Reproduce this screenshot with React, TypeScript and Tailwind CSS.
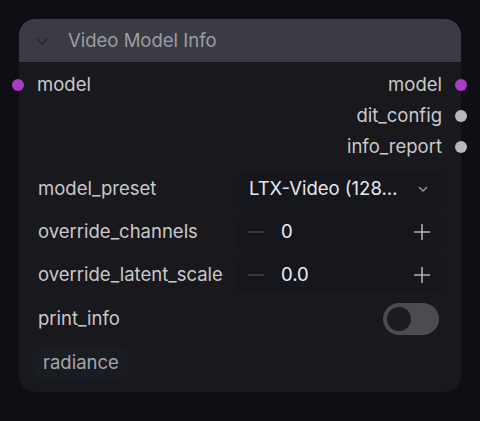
import React from 'react';

const Dot = ({ color }: { color: string }) => (
  <span className={`block w-[12px] h-[12px] rounded-full ${color}`} />
);

const App: React.FC = () => {
  return (
    <div
      className="w-[480px] h-[421px] bg-[#0d0f14] pt-[19px] pl-[19px]"
      style={{ fontFamily: 'Inter, "Liberation Sans", sans-serif' }}
    >
      <div className="relative w-[442px] h-[373px] rounded-[16px] bg-[#19181c]">
        {/* Header */}
        <div className="flex items-center h-[43px] rounded-t-[16px] bg-[#3b3b44] pl-[15px]">
          <svg width="16" height="16" viewBox="0 0 16 16" className="text-[#2a2b33]">
            <path d="M3 6l5 5 5-5" fill="none" stroke="currentColor" strokeWidth="1.8" strokeLinecap="round" strokeLinejoin="round" />
          </svg>
          <span className="ml-[18px] text-[18.5px] text-[#9c9ca4]">Video Model Info</span>
        </div>

        {/* Slots */}
        <div className="relative pt-[7px] text-[18.5px] text-[#c9c9cc]">
          <div className="flex items-center justify-between h-[31px]">
            <div className="flex items-center">
              <span className="-ml-[7px]"><Dot color="bg-[#a83cc4]" /></span>
              <span className="ml-[13px]">model</span>
            </div>
            <div className="flex items-center">
              <span className="mr-[13px]">model</span>
              <span className="-mr-[6px]"><Dot color="bg-[#a83cc4]" /></span>
            </div>
          </div>
          <div className="flex items-center justify-end h-[31px]">
            <span className="mr-[13px]">dit_config</span>
            <span className="-mr-[6px]"><Dot color="bg-[#b8b8b8]" /></span>
          </div>
          <div className="flex items-center justify-end h-[31px]">
            <span className="mr-[13px]">info_report</span>
            <span className="-mr-[6px]"><Dot color="bg-[#b8b8b8]" /></span>
          </div>
        </div>

        {/* Widgets */}
        <div className="flex flex-col gap-[9px] pt-[10px] px-[19px] text-[18.5px] text-[#c9c9cc]">
          <div className="flex items-center justify-between h-[34px]">
            <span>model_preset</span>
            <div className="flex items-center justify-between w-[203px] h-[34px] rounded-[8px] bg-[#15171d] pl-[10px] pr-[12px] text-[#e8e8ea]">
              <span>LTX-Video (128…</span>
              <svg width="14" height="14" viewBox="0 0 14 14" className="text-[#9a9aa0]">
                <path d="M3.5 5.5l3.5 3.5 3.5-3.5" fill="none" stroke="currentColor" strokeWidth="1.4" strokeLinecap="round" strokeLinejoin="round" />
              </svg>
            </div>
          </div>
          <div className="flex items-center justify-between h-[34px]">
            <span>override_channels</span>
            <div className="flex items-center w-[205px] h-[35px] rounded-[8px] bg-[#15171d] pl-[9px] pr-[10px]">
              <svg width="20" height="20" viewBox="0 0 20 20" className="text-[#3d4048]">
                <path d="M2 10h16" stroke="currentColor" strokeWidth="1.6" />
              </svg>
              <span className="ml-[15px] text-[#f0f0f2]">0</span>
              <svg width="20" height="20" viewBox="0 0 20 20" className="ml-auto text-[#b0b0b4]">
                <path d="M2 10h16M10 2v16" stroke="currentColor" strokeWidth="1.6" />
              </svg>
            </div>
          </div>
          <div className="flex items-center justify-between h-[34px]">
            <span>override_latent_scale</span>
            <div className="flex items-center w-[205px] h-[35px] rounded-[8px] bg-[#15171d] pl-[9px] pr-[10px]">
              <svg width="20" height="20" viewBox="0 0 20 20" className="text-[#3d4048]">
                <path d="M2 10h16" stroke="currentColor" strokeWidth="1.6" />
              </svg>
              <span className="ml-[15px] text-[#f0f0f2]">0.0</span>
              <svg width="20" height="20" viewBox="0 0 20 20" className="ml-auto text-[#b0b0b4]">
                <path d="M2 10h16M10 2v16" stroke="currentColor" strokeWidth="1.6" />
              </svg>
            </div>
          </div>
          <div className="flex items-center justify-between h-[36px] pr-[3px]">
            <span>print_info</span>
            <div className="flex items-center w-[56px] h-[32px] rounded-full bg-[#4b4c50] px-[4px]">
              <span className="block w-[24px] h-[24px] rounded-full bg-[#1c1c1f]" />
            </div>
          </div>
          <div className="flex">
            <span className="-ml-[5px] px-[10px] h-[33px] flex items-center rounded-[10px] bg-[#1a1c23] text-[#a5a5aa]">
              radiance
            </span>
          </div>
        </div>
      </div>
    </div>
  );
};

export default App;
